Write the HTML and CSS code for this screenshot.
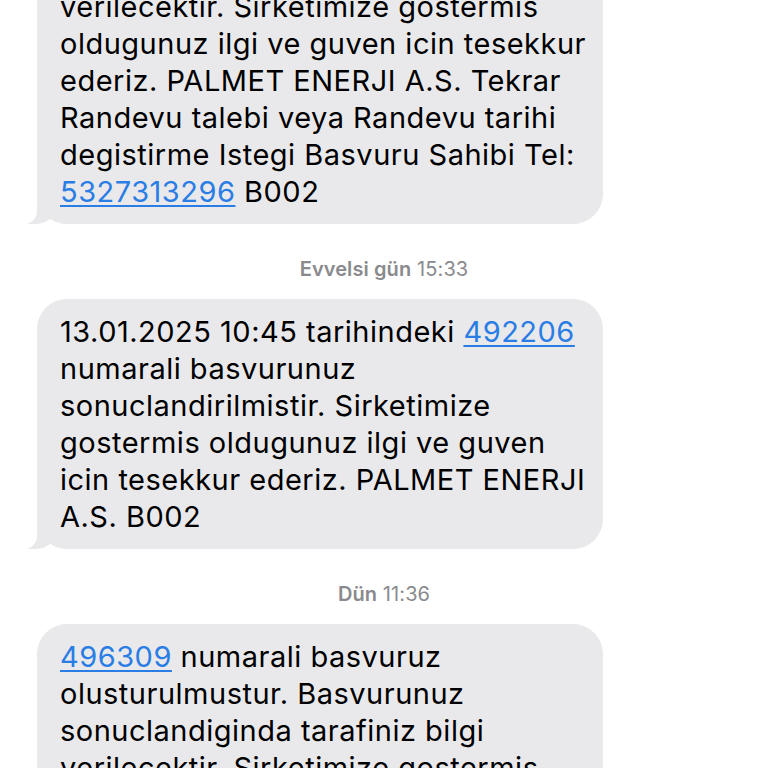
FILE: index.html
```html
<!DOCTYPE html>
<html lang="tr">
<head>
<meta charset="utf-8">
<title>Mesajlar</title>
<link rel="stylesheet" href="styles.css">
</head>
<body>
<main class="thread">
  <div class="bubble">
    <span class="line"><a class="link" href="#">492201</a> numarali basvuruz</span>
    <span class="line">olusturulmustur. Basvurunuz</span>
    <span class="line">sonuclandiginda tarafiniz bilgi</span>
    <span class="line">verilecektir. Sirketimize gostermis</span>
    <span class="line">oldugunuz ilgi ve guven icin tesekkur</span>
    <span class="line">ederiz. PALMET ENERJI A.S. Tekrar</span>
    <span class="line">Randevu talebi veya Randevu tarihi</span>
    <span class="line">degistirme Istegi Basvuru Sahibi Tel:</span>
    <span class="line"><a class="link" href="#">5327313296</a> B002</span>
  </div>

  <div class="stamp"><span class="day">Evvelsi gün</span> 15:33</div>

  <div class="bubble">
    <span class="line">13.01.2025 10:45 tarihindeki <a class="link" href="#">492206</a></span>
    <span class="line">numarali basvurunuz</span>
    <span class="line">sonuclandirilmistir. Sirketimize</span>
    <span class="line">gostermis oldugunuz ilgi ve guven</span>
    <span class="line">icin tesekkur ederiz. PALMET ENERJI</span>
    <span class="line">A.S. B002</span>
  </div>

  <div class="stamp"><span class="day">Dün</span> 11:36</div>

  <div class="bubble">
    <span class="line"><a class="link" href="#">496309</a> numarali basvuruz</span>
    <span class="line">olusturulmustur. Basvurunuz</span>
    <span class="line">sonuclandiginda tarafiniz bilgi</span>
    <span class="line">verilecektir. Sirketimize gostermis</span>
    <span class="line">oldugunuz ilgi ve guven icin tesekkur</span>
    <span class="line">ederiz.</span>
  </div>
</main>
</body>
</html>
```

FILE: styles.css
```css
html, body {
  margin: 0;
  padding: 0;
  background: #ffffff;
}

body {
  width: 768px;
  height: 768px;
  overflow: hidden;
  font-family: Inter, "Noto Sans", "Liberation Sans", sans-serif;
  color: #000000;
}

.thread {
  display: flex;
  flex-direction: column;
  align-items: flex-start;
  margin-top: -137px;
  padding-left: 37px;
}

.bubble {
  position: relative;
  box-sizing: border-box;
  width: 566px;
  padding: 14px 23px;
  background: #e9e9eb;
  border-radius: 30px;
  font-size: 29px;
  line-height: 37px;
  letter-spacing: 0.5px;
}

.bubble::before {
  content: "";
  position: absolute;
  left: -9px;
  bottom: 0;
  width: 30px;
  height: 30px;
  background: #e9e9eb;
  border-bottom-right-radius: 22px;
}

.bubble::after {
  content: "";
  position: absolute;
  left: -16px;
  bottom: 0;
  width: 16px;
  height: 30px;
  background: #ffffff;
  border-bottom-right-radius: 13px;
}

.line {
  display: block;
  white-space: nowrap;
}

.link {
  color: #2a7de4;
  text-decoration: underline;
  text-decoration-thickness: 2px;
  text-underline-offset: 3px;
}

.stamp {
  align-self: stretch;
  margin: 34px 37px 19px 0;
  text-align: center;
  font-size: 20px;
  line-height: 22px;
  color: #8a8a8e;
  letter-spacing: 0.1px;
}

.day {
  font-weight: 600;
}
```
